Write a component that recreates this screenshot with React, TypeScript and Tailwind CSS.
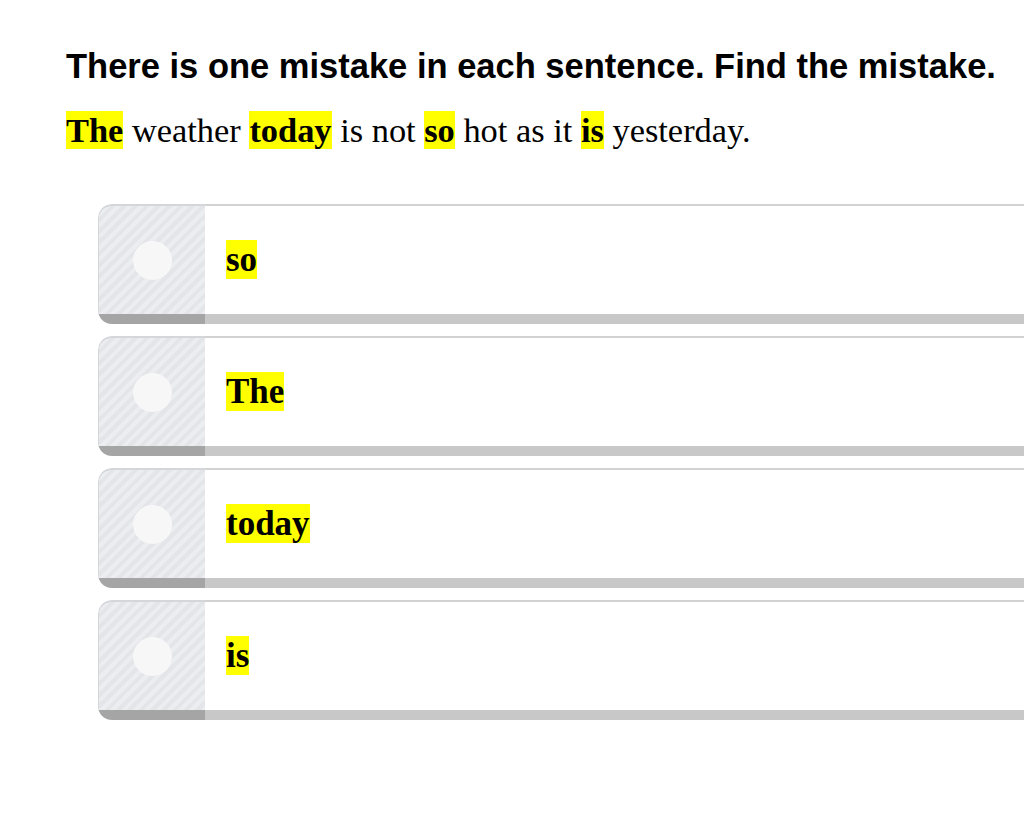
import React from "react";

const options = ["so", "The", "today", "is"];

function Hl({ children }: { children: React.ReactNode }) {
  return <b className="bg-[#ffff00] font-bold">{children}</b>;
}

export default function App() {
  return (
    <div className="w-[1024px] h-[815px] overflow-hidden bg-white">
      <div className="pt-[44px] pl-[66px]">
        <h1 className="text-[34.5px] leading-[44px] font-bold text-black whitespace-nowrap font-['Liberation_Sans',Arial,sans-serif]">
          There is one mistake in each sentence. Find the mistake.
        </h1>
        <p className="mt-[20px] text-[34.4px] leading-[44px] text-black whitespace-nowrap font-['Liberation_Serif','Times_New_Roman',serif]">
          <Hl>The</Hl> weather <Hl>today</Hl> is not <Hl>so</Hl> hot as it <Hl>is</Hl> yesterday.
        </p>
      </div>
      <div className="mt-[52px] ml-[98px] flex flex-col gap-[12px] w-[960px]">
        {options.map((o) => (
          <div key={o} className="flex h-[120px] rounded-l-[14px] overflow-hidden">
            <div className="w-[107px] flex flex-col">
              <div className="flex-1 flex items-center justify-center border-t-2 border-l border-[#d4d6d9] rounded-tl-[14px] bg-[repeating-linear-gradient(135deg,#e3e5e8_0px,#e3e5e8_4px,#ebedf0_4px,#ebedf0_8px)]">
                <div className="w-[39px] h-[39px] rounded-full bg-[#f7f7f8]" />
              </div>
              <div className="h-[10px] bg-[#a5a5a5]" />
            </div>
            <div className="flex-1 flex flex-col">
              <div className="flex-1 flex items-center pl-[21px] border-t-2 border-[#d2d2d2] bg-white">
                <span className="text-[35px] leading-[40px] text-black font-['Liberation_Serif','Times_New_Roman',serif]">
                  <Hl>{o}</Hl>
                </span>
              </div>
              <div className="h-[10px] bg-[#c8c8c8]" />
            </div>
          </div>
        ))}
      </div>
    </div>
  );
}
